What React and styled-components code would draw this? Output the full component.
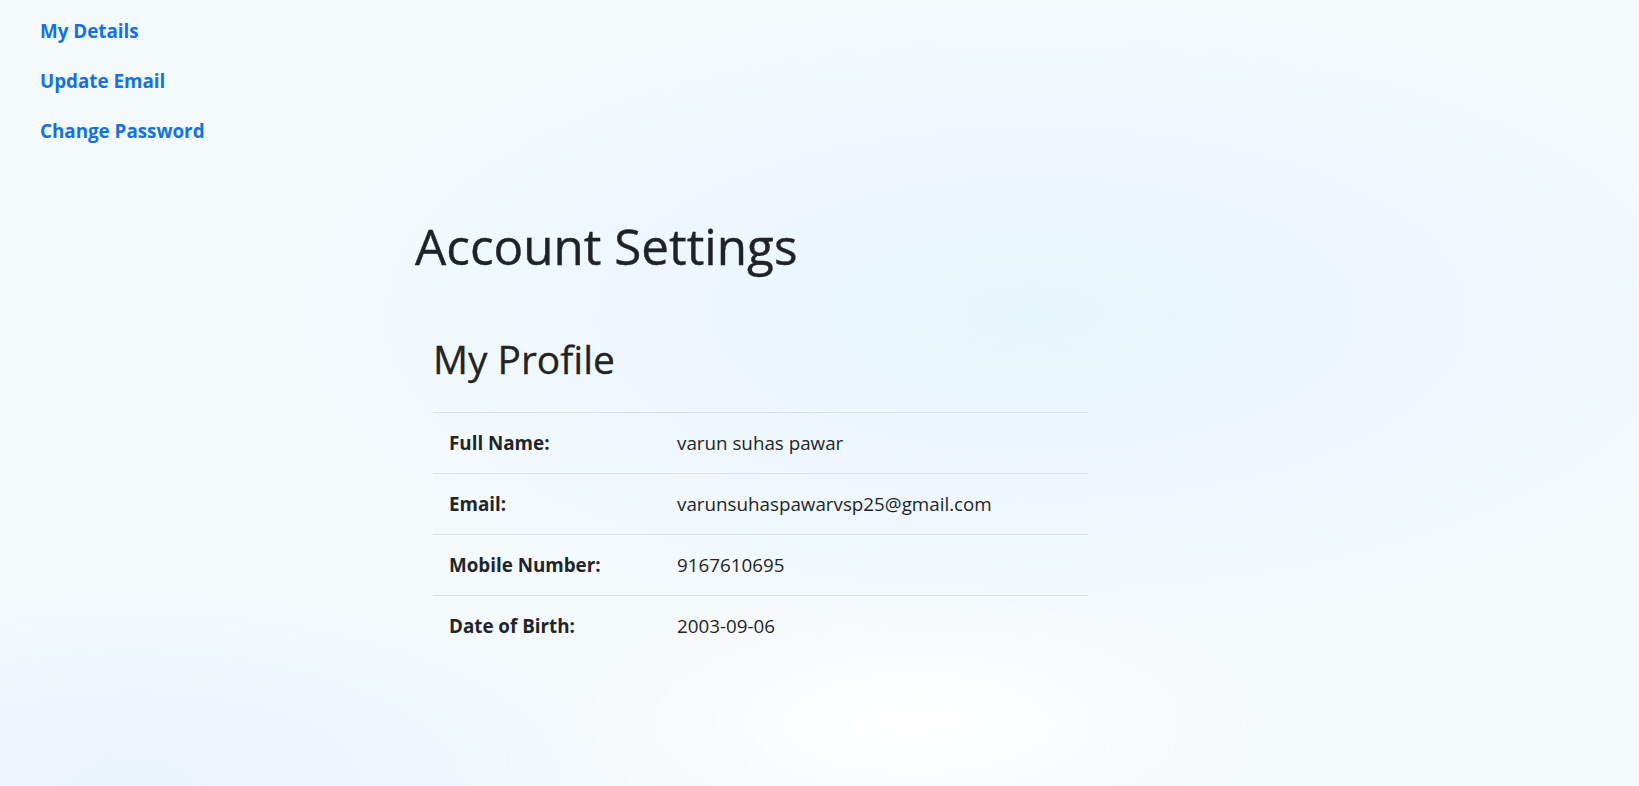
import styled, { createGlobalStyle } from 'styled-components';

const GlobalStyle = createGlobalStyle`
  html, body {
    margin: 0;
    padding: 0;
  }

  body {
    min-height: 100vh;
    font-family: 'Open Sans', 'Noto Sans', sans-serif;
    color: #212529;
    background-color: #f4f9fc;
    background-image:
      radial-gradient(ellipse 22% 18% at 56% 92%, rgba(255, 255, 255, 0.95), rgba(255, 255, 255, 0)),
      radial-gradient(ellipse 45% 40% at 63% 40%, #e6f6fd 0%, rgba(234, 246, 252, 0.6) 55%, rgba(244, 249, 252, 0) 100%),
      radial-gradient(ellipse 30% 25% at 8% 100%, #e9f4fb, rgba(233, 244, 251, 0));
    background-attachment: fixed;
  }
`;

const Page = styled.div`
  display: flex;
  min-height: 100vh;
`;

const Sidebar = styled.nav`
  display: flex;
  flex-direction: column;
  gap: 20px;
  width: 260px;
  flex-shrink: 0;
  padding: 16px 0 0 40px;
  box-sizing: border-box;
`;

const SideLink = styled.a`
  display: block;
  font-size: 18.8px;
  line-height: 30px;
  font-weight: 700;
  color: #1271e6;
  text-decoration: none;
  cursor: pointer;
`;

const Main = styled.main`
  flex: 1;
  padding: 216px 0 0 155px;
`;

const Title = styled.h1`
  margin: 0;
  font-size: 49.4px;
  line-height: 1.2;
  font-weight: 400;
  color: #1f2326;
  -webkit-text-stroke: 0.4px #1f2326;
`;

const Profile = styled.section`
  margin-top: 61px;
  padding-left: 18px;
`;

const ProfileTitle = styled.h2`
  margin: 0 0 29px;
  font-size: 38.9px;
  line-height: 1.2;
  font-weight: 400;
  color: #1f2326;
  -webkit-text-stroke: 0.3px #1f2326;
`;

const Table = styled.table`
  width: 655px;
  border-collapse: collapse;
`;

const Row = styled.tr`
  border-top: 1px solid #dee2e6;
`;

const Cell = styled.td`
  padding: 15px 16px;
  font-size: 18.8px;
  line-height: 30px;
  font-weight: ${(p) => (p.$label ? 700 : 400)};
  width: ${(p) => (p.$label ? '196px' : 'auto')};
  color: #212529;
  vertical-align: middle;
`;

const details = [
  ['Full Name:', 'varun suhas pawar'],
  ['Email:', 'varunsuhaspawarvsp25@gmail.com'],
  ['Mobile Number:', '9167610695'],
  ['Date of Birth:', '2003-09-06'],
];

export default function App() {
  return (
    <>
      <GlobalStyle />
      <Page>
        <Sidebar>
          <SideLink>My Details</SideLink>
          <SideLink>Update Email</SideLink>
          <SideLink>Change Password</SideLink>
        </Sidebar>
        <Main>
          <Title>Account Settings</Title>
          <Profile>
            <ProfileTitle>My Profile</ProfileTitle>
            <Table>
              <tbody>
                {details.map(([label, value]) => (
                  <Row key={label}>
                    <Cell $label>{label}</Cell>
                    <Cell>{value}</Cell>
                  </Row>
                ))}
              </tbody>
            </Table>
          </Profile>
        </Main>
      </Page>
    </>
  );
}
